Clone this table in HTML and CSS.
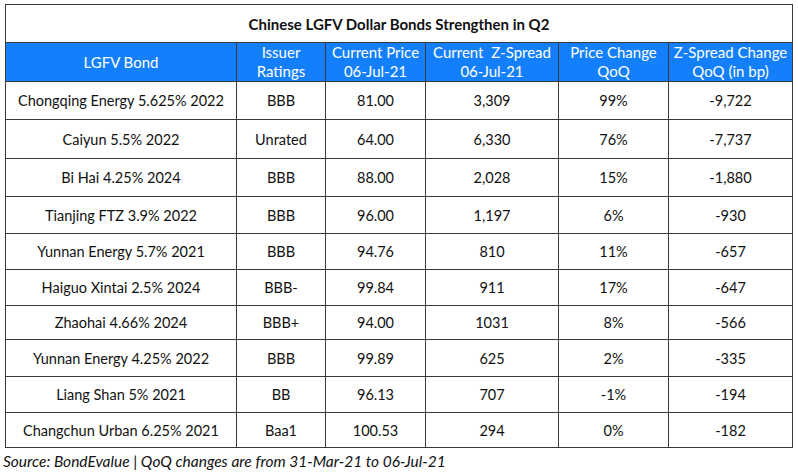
FILE: index.html
```html
<!DOCTYPE html>
<html>
<head>
<meta charset="utf-8">
<link rel="stylesheet" href="styles.css">
</head>
<body>
<div class="page">
<table class="bonds">
<colgroup>
<col class="c1"><col class="c2"><col class="c3"><col class="c4"><col class="c5"><col class="c6">
</colgroup>
<thead>
<tr class="title-row"><th colspan="6" class="title">Chinese LGFV Dollar Bonds Strengthen in Q2</th></tr>
<tr class="head-row">
<th>LGFV Bond</th>
<th>Issuer<br>Ratings</th>
<th>Current Price<br>06-Jul-21</th>
<th>Current&nbsp; Z-Spread<br>06-Jul-21</th>
<th>Price Change<br>QoQ</th>
<th>Z-Spread Change<br>QoQ (in bp)</th>
</tr>
</thead>
<tbody>
<tr class="r1"><td>Chongqing Energy 5.625% 2022</td><td>BBB</td><td>81.00</td><td>3,309</td><td>99%</td><td>-9,722</td></tr>
<tr class="r2"><td>Caiyun 5.5% 2022</td><td>Unrated</td><td>64.00</td><td>6,330</td><td>76%</td><td>-7,737</td></tr>
<tr class="r3"><td>Bi Hai 4.25% 2024</td><td>BBB</td><td>88.00</td><td>2,028</td><td>15%</td><td>-1,880</td></tr>
<tr class="r4"><td>Tianjing FTZ 3.9% 2022</td><td>BBB</td><td>96.00</td><td>1,197</td><td>6%</td><td>-930</td></tr>
<tr class="r5"><td>Yunnan Energy 5.7% 2021</td><td>BBB</td><td>94.76</td><td>810</td><td>11%</td><td>-657</td></tr>
<tr class="r6"><td>Haiguo Xintai 2.5% 2024</td><td>BBB-</td><td>99.84</td><td>911</td><td>17%</td><td>-647</td></tr>
<tr class="r7"><td>Zhaohai 4.66% 2024</td><td>BBB+</td><td>94.00</td><td>1031</td><td>8%</td><td>-566</td></tr>
<tr class="r8"><td>Yunnan Energy 4.25% 2022</td><td>BBB</td><td>99.89</td><td>625</td><td>2%</td><td>-335</td></tr>
<tr class="r9"><td>Liang Shan 5% 2021</td><td>BB</td><td>96.13</td><td>707</td><td>-1%</td><td>-194</td></tr>
<tr class="r10"><td>Changchun Urban 6.25% 2021</td><td>Baa1</td><td>100.53</td><td>294</td><td>0%</td><td>-182</td></tr>
</tbody>
</table>
<p class="source">Source: BondEvalue | QoQ changes are from 31-Mar-21 to 06-Jul-21</p>
</div>
</body>
</html>
```

FILE: styles.css
```css
html, body {
  margin: 0;
  padding: 0;
  background: #ffffff;
}
.page {
  padding: 4px 0 0 5px;
  font-family: Lato, "Liberation Sans", sans-serif;
  color: #111111;
}
.bonds {
  border-collapse: collapse;
  width: 787px;
  table-layout: fixed;
  font-size: 14.5px;
}
.c1 { width: 231px; }
.c2 { width: 89px; }
.c3 { width: 100px; }
.c4 { width: 133px; }
.c5 { width: 110px; }
.c6 { width: 124px; }
.bonds th, .bonds td {
  border: 1px solid #3a3a3a;
  text-align: center;
  padding: 0;
}
.title-row th {
  height: 37px;
  font-weight: bold;
  font-size: 15px;
  color: #111111;
  background: #ffffff;
}
.head-row th {
  height: 38px;
  background: #137ffb;
  color: #ffffff;
  font-weight: normal;
  font-size: 15px;
  line-height: 19px;
}
.bonds td {
  height: 36px;
}
.r1 td { height: 37px; }
.r2 td { height: 38px; }
.r3 td { height: 37px; }
.r4 td { height: 36px; }
.r5 td, .r6 td { height: 35px; }
.r7 td { height: 33px; }
.r8 td { height: 36px; }
.r9 td { height: 35px; }
.r10 td { height: 34px; }
.source {
  margin: 4px 0 0 -2px;
  font-style: italic;
  font-size: 15.5px;
  color: #111111;
}
```
